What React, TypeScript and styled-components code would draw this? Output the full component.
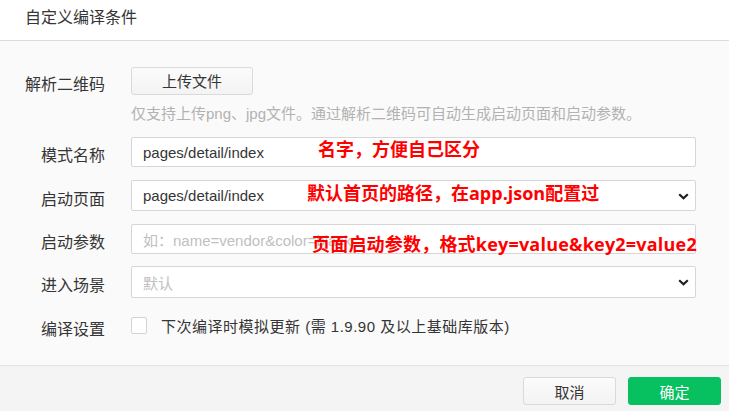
import React from "react";
import styled, { createGlobalStyle } from "styled-components";

const Global = createGlobalStyle`
  html, body { margin: 0; padding: 0; background: #fafafa; }
  body { font-family: "Liberation Sans", "Noto Sans CJK SC", sans-serif; color: #353535; }
  * { box-sizing: border-box; }
`;

const Dialog = styled.div`
  width: 729px;
  height: 411px;
  display: flex;
  flex-direction: column;
  background: #fafafa;
  overflow: hidden;
`;

const Header = styled.div`
  height: 41px;
  flex: none;
  background: #fff;
  border-bottom: 1px solid #dcdcdc;
  padding: 8px 0 0 25px;
  font-size: 16px;
  line-height: 20px;
  color: #353535;
`;

const Body = styled.div`
  position: relative;
  flex: 1;
  padding: 25px 33px 0 25px;
  display: grid;
  grid-template-columns: 80px 1fr;
  column-gap: 26px;
  align-content: start;
`;

const Label = styled.div<{ $mt?: number; $shift?: number }>`
  margin-top: ${(p) => p.$mt ?? 0}px;
  text-align: right;
  font-size: 16px;
  line-height: 20px;
  color: #353535;
  white-space: nowrap;
  align-self: center;
  padding-top: ${(p) => p.$shift ?? 8}px;
`;

const Cell = styled.div<{ $mt?: number; $top?: boolean }>`
  margin-top: ${(p) => p.$mt ?? 0}px;
  display: flex;
  align-items: center;
  align-self: ${(p) => (p.$top ? "start" : "stretch")};
`;

const UploadButton = styled.button`
  width: 122px;
  height: 28px;
  border: 1px solid #dadada;
  border-radius: 3px;
  background: linear-gradient(#fbfbfb, #f3f3f3);
  font-family: inherit;
  font-size: 15px;
  color: #353535;
  padding: 0;
`;

const Hint = styled.div`
  font-size: 15px;
  line-height: 20px;
  color: #b2b2b2;
  white-space: nowrap;
`;

const Field = styled.div<{ $h: number }>`
  position: relative;
  width: 100%;
  height: ${(p) => p.$h}px;
  border: 1px solid #d6d6d6;
  border-radius: 2px;
  background: #fff;
  display: flex;
  align-items: center;
  padding: 0 11px;
  font-size: 15px;
  color: #353535;
`;

const Placeholder = styled.span`
  color: #c0c0c0;
  white-space: nowrap;
  overflow: hidden;
`;

const Chevron = styled.svg`
  position: absolute;
  right: 6px;
  top: 50%;
  margin-top: -3px;
`;

const CheckRow = styled.div`
  display: flex;
  align-items: center;
  gap: 14px;
  height: 20px;
  font-size: 15px;
  letter-spacing: 0.5px;
  color: #353535;
  white-space: nowrap;
`;

const Box = styled.span`
  width: 16px;
  height: 17px;
  border: 1px solid #d3d3d3;
  border-radius: 2px;
  background: #fff;
  flex: none;
`;

const Note = styled.div<{ $x: number; $y: number; $ls?: number }>`
  position: absolute;
  left: ${(p) => p.$x}px;
  top: ${(p) => p.$y}px;
  color: #ff0000;
  font-family: "Open Sans", "Noto Sans CJK SC", sans-serif;
  font-weight: 700;
  font-size: 18px;
  line-height: 22px;
  letter-spacing: ${(p) => p.$ls ?? 0}px;
  white-space: nowrap;
`;

const Footer = styled.div`
  height: 46px;
  flex: none;
  border-top: 1px solid #e3e3e3;
  background: #f4f4f4;
  display: flex;
  justify-content: flex-end;
  align-items: flex-start;
  gap: 12px;
  padding: 11px 8px 0 0;
`;

const FooterButton = styled.button<{ $primary?: boolean }>`
  width: 93px;
  height: 28px;
  border-radius: 3px;
  font-family: inherit;
  font-size: 15px;
  padding: 0;
  border: 1px solid ${(p) => (p.$primary ? "#07c160" : "#dadada")};
  background: ${(p) => (p.$primary ? "#07c160" : "linear-gradient(#fbfbfb, #f3f3f3)")};
  color: ${(p) => (p.$primary ? "#fff" : "#353535")};
`;

const ChevronIcon = () => (
  <Chevron width="11" height="7" viewBox="0 0 11 7">
    <polyline points="1.2,1.2 5.5,5.2 9.8,1.2" fill="none" stroke="#1e1e1e" strokeWidth="2.2" />
  </Chevron>
);

export default function App() {
  return (
    <>
      <Global />
      <Dialog>
        <Header>自定义编译条件</Header>
        <Body>
          <Label $shift={9}>解析二维码</Label>
          <Cell>
            <UploadButton>上传文件</UploadButton>
          </Cell>
          <div />
          <Cell $mt={9}>
            <Hint>仅支持上传png、jpg文件。通过解析二维码可自动生成启动页面和启动参数。</Hint>
          </Cell>

          <Label $mt={13}>模式名称</Label>
          <Cell $mt={13}>
            <Field $h={30}>pages/detail/index</Field>
          </Cell>

          <Label $mt={13}>启动页面</Label>
          <Cell $mt={13}>
            <Field $h={31}>
              pages/detail/index
              <ChevronIcon />
            </Field>
          </Cell>

          <Label $mt={13}>启动参数</Label>
          <Cell $mt={13}>
            <Field $h={30}>
              <Placeholder>如：name=vendor&amp;color=black</Placeholder>
            </Field>
          </Cell>

          <Label $mt={12}>进入场景</Label>
          <Cell $mt={12}>
            <Field $h={32}>
              <Placeholder>默认</Placeholder>
              <ChevronIcon />
            </Field>
          </Cell>

          <Label $mt={17} $shift={5}>编译设置</Label>
          <Cell $mt={17} $top>
            <CheckRow>
              <Box />
              下次编译时模拟更新 (需 1.9.90 及以上基础库版本)
            </CheckRow>
          </Cell>

          <Note $x={318} $y={97}>名字，方便自己区分</Note>
          <Note $x={307} $y={141}>默认首页的路径，在app.json配置过</Note>
          <Note $x={312} $y={192} $ls={0.2}>页面启动参数，格式key=value&amp;key2=value2</Note>
        </Body>
        <Footer>
          <FooterButton>取消</FooterButton>
          <FooterButton $primary>确定</FooterButton>
        </Footer>
      </Dialog>
    </>
  );
}
